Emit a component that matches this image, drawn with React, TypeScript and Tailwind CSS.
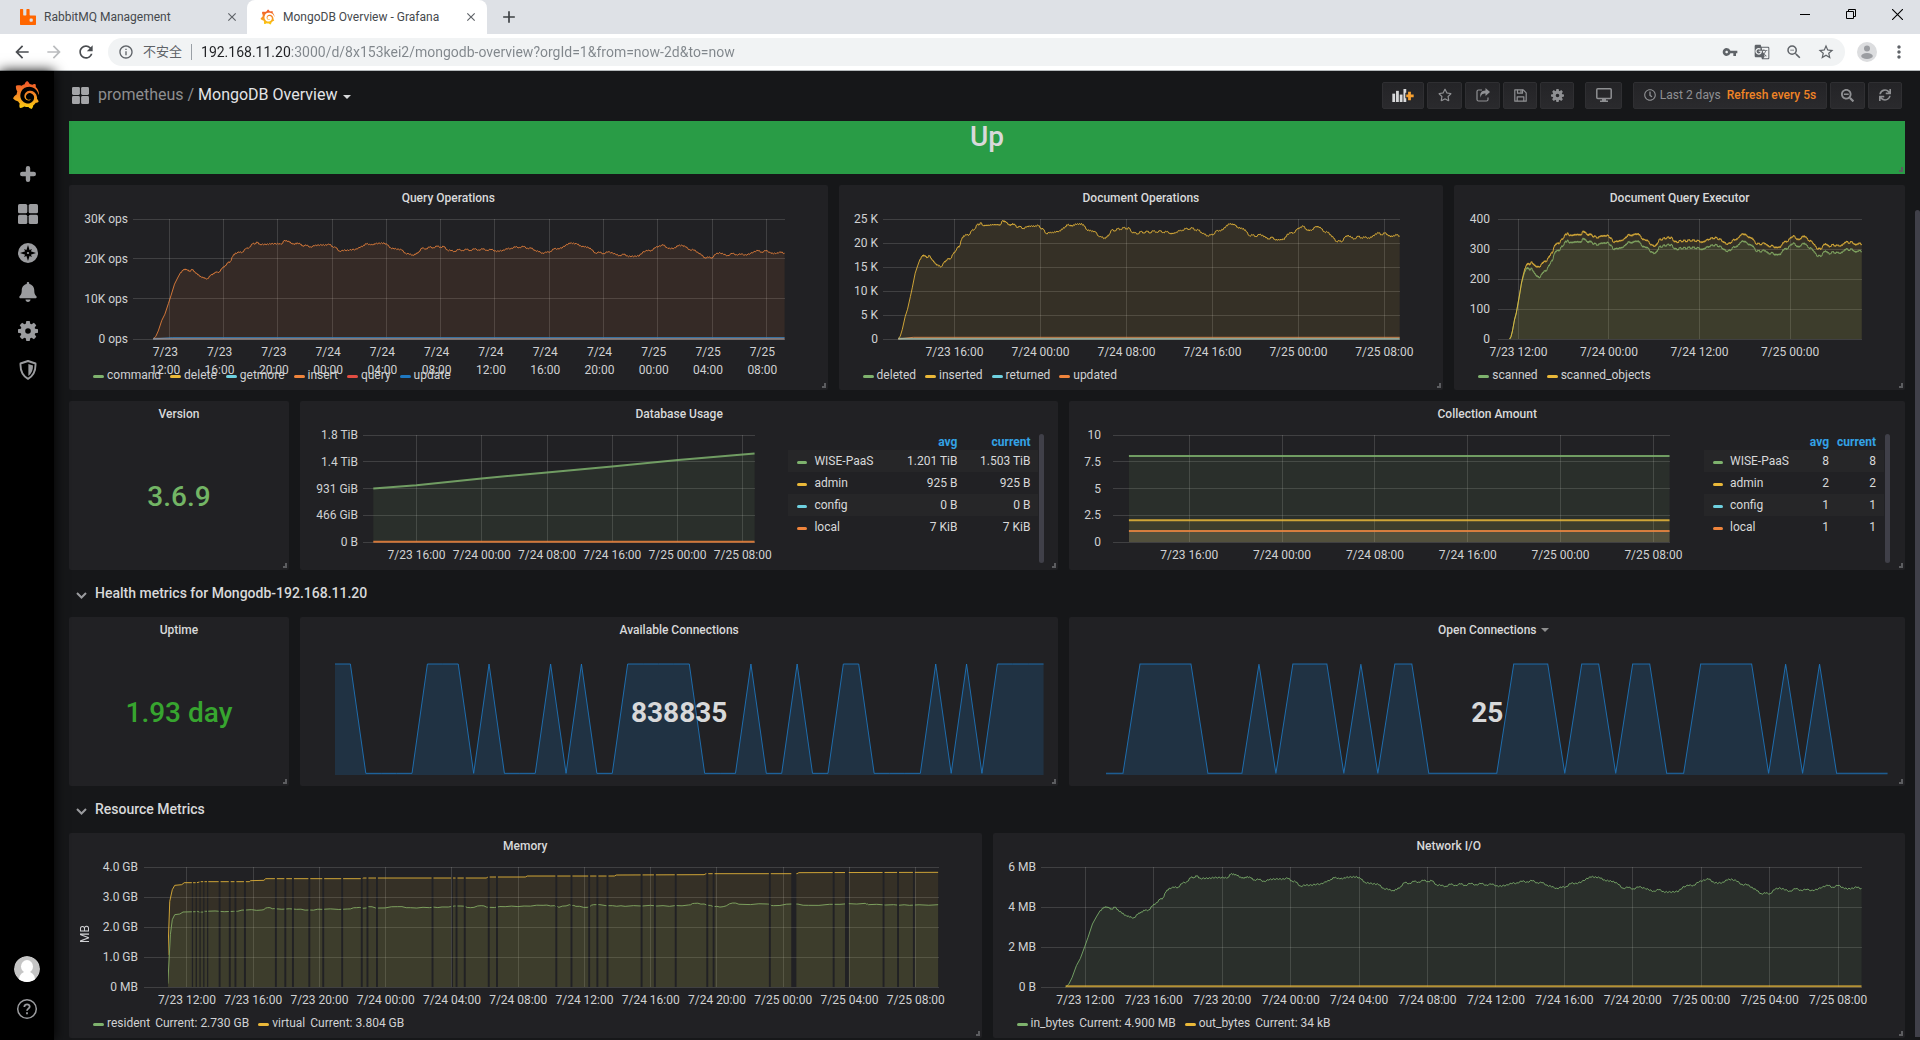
import React, { useId } from "react";
import { FaBell, FaRegClock, FaRegStar, FaSearchMinus, FaSync } from "react-icons/fa";
import {
  MdAdd,
  MdArrowBack,
  MdArrowForward,
  MdClose,
  MdGTranslate,
  MdInfoOutline,
  MdMoreVert,
  MdRefresh,
  MdStarBorder,
  MdVpnKey,
  MdZoomOut,
} from "react-icons/md";
import { SiGrafana, SiRabbitmq } from "react-icons/si";

type Point = [number, number];

const GREEN = "#7eb26d";
const YELLOW = "#eab839";
const CYAN = "#6ed0e0";
const ORANGE = "#ef843c";
const RED = "#e24d42";
const BLUE = "#1f78c1";

/* ---------- data ---------- */

const LOAD_RAW: Point[] = [
  [170, 477], [175, 468], [180, 448], [187, 410], [193, 388], [200, 350], [205, 322], [212, 280], [218, 258], [224, 238],
  [229, 231], [233, 225], [238, 231], [242, 233], [247, 228], [252, 235], [258, 247], [264, 252], [270, 259], [277, 260],
  [283, 250], [288, 242], [294, 238], [300, 236], [306, 224], [312, 213], [318, 203], [322, 199], [327, 180], [332, 168],
  [340, 166], [346, 165], [352, 154], [360, 147], [366, 135], [371, 134], [375, 130], [380, 136], [388, 139], [395, 135],
  [402, 137], [410, 133], [418, 137], [424, 134], [428, 125], [433, 123], [438, 129], [444, 133], [449, 138], [454, 131],
  [460, 137], [465, 142], [472, 141], [480, 146], [488, 143], [495, 138], [503, 141], [510, 138], [518, 138], [524, 145],
  [530, 149], [537, 161], [545, 160], [553, 157], [561, 158], [570, 153], [578, 149], [585, 140], [590, 136], [597, 136],
  [603, 140], [610, 132], [618, 135], [625, 131], [632, 140], [638, 149], [645, 154], [653, 153], [660, 158], [667, 168],
  [675, 173], [682, 175], [688, 173], [694, 163], [700, 151], [708, 153], [715, 147], [722, 149], [730, 144], [737, 147],
  [743, 145], [750, 157], [757, 160], [765, 162], [772, 156], [780, 159], [788, 155], [795, 159], [803, 154], [812, 157],
  [820, 154], [828, 158], [836, 156], [845, 160], [852, 163], [860, 157], [868, 154], [876, 151], [884, 147], [892, 148],
  [900, 145], [908, 151], [915, 151], [923, 158], [930, 164], [938, 168], [946, 166], [953, 163], [960, 154], [968, 152],
  [976, 151], [985, 137], [992, 134], [999, 132], [1006, 137], [1013, 142], [1020, 147], [1027, 146], [1034, 156],
  [1042, 168], [1050, 166], [1058, 170], [1066, 165], [1075, 166], [1083, 175], [1090, 177], [1098, 173], [1105, 178],
  [1112, 182], [1120, 178], [1128, 180], [1136, 163], [1145, 160], [1152, 159], [1160, 150], [1168, 142], [1176, 140],
  [1183, 148], [1190, 154], [1198, 149], [1205, 143], [1212, 139], [1220, 147], [1228, 156], [1236, 158], [1244, 165],
  [1251, 176], [1258, 185], [1265, 184], [1272, 185], [1279, 173], [1287, 166], [1295, 174], [1303, 177], [1312, 170],
  [1320, 174], [1328, 173], [1338, 174], [1346, 173], [1355, 162], [1363, 160], [1370, 165], [1378, 160], [1386, 165],
  [1393, 172], [1400, 167], [1408, 166], [1415, 169],
];

/* Adds the small sampling ripple between two readings. */
function ripple(points: Point[], from: number, size: number): Point[] {
  const out: Point[] = [];
  points.forEach((p, i) => {
    out.push(p);
    const next = points[i + 1];
    if (next && p[0] > from) {
      const wobble = (i % 2 === 0 ? 1 : -1) * size;
      out.push([(p[0] * 2 + next[0]) / 3, (p[1] * 2 + next[1]) / 3 + wobble]);
      out.push([(p[0] + next[0] * 2) / 3, (p[1] + next[1] * 2) / 3 - wobble]);
    }
  });
  return out;
}

const LOAD: Point[] = ripple(
  LOAD_RAW.map(([x, y]): Point => [(x - 170) / 1245, (477 - y) / 359]),
  0.04,
  0.007,
);

const scaled = (k: number): Point[] => LOAD.map(([x, v]): Point => [x, v * k]);

const SCANNED = scaled(0.85);
const SCANNED_OBJECTS = SCANNED.map(([x, v]): Point => {
  const extra = x < 0.03 ? 0 : x < 0.085 ? ((x - 0.03) / 0.055) * 0.09 : x < 0.13 ? 0.09 - ((x - 0.085) / 0.045) * 0.03 : 0.06;
  return [x, v + extra];
});

const mem = (pts: Point[]): Point[] => pts.map(([x, y]): Point => [(x - 266) / 1220, (487 - y) / 360]);

const MEM_VIRTUAL = mem([
  [266, 391], [269, 230], [273, 195], [277, 182], [288, 180], [292, 174], [312, 174], [318, 171], [395, 171], [397, 168],
  [418, 167], [421, 162], [573, 162], [576, 160], [770, 160], [773, 157], [832, 157], [835, 154], [973, 154], [976, 151],
  [1115, 150], [1118, 147], [1262, 147], [1265, 144], [1486, 143],
]);

const MEM_RESIDENT = ripple(
  mem([
    [266, 477], [270, 330], [273, 285], [277, 270], [285, 268], [290, 262], [310, 261], [320, 262], [326, 260], [370, 260],
    [390, 256], [415, 256], [424, 249], [435, 252], [470, 254], [490, 256], [510, 254], [550, 253], [565, 249], [580, 250],
    [584, 246], [600, 250], [630, 246], [650, 249], [680, 249], [700, 247], [730, 244], [745, 249], [762, 243], [775, 248],
    [800, 246], [830, 244], [860, 242], [878, 243], [885, 248], [902, 240], [912, 245], [930, 248], [940, 240], [970, 243],
    [990, 245], [1030, 242], [1060, 245], [1090, 241], [1100, 236], [1115, 238], [1130, 246], [1145, 246], [1160, 235],
    [1175, 239], [1215, 238], [1225, 243], [1255, 238], [1280, 242], [1330, 239], [1370, 236], [1375, 240], [1415, 240],
    [1440, 242], [1486, 240],
  ]),
  0.03,
  0.003,
);

/* Moments without a reading, as [position, width]. */
const MEM_GAPS: Point[] = [
  [305, 2], [311, 2], [317, 2], [323, 2], [329, 2], [348, 3], [364, 3], [373, 3], [388, 3], [437, 3], [452, 3], [464, 3],
  [490, 3], [512, 3], [542, 3], [573, 3], [582, 3], [597, 3], [685, 3], [716, 3], [723, 3], [736, 3], [774, 3], [787, 3],
  [881, 3], [905, 3], [933, 3], [946, 3], [962, 3], [1016, 3], [1037, 3], [1070, 3], [1120, 3], [1130, 3], [1219, 3],
  [1257, 8], [1320, 3], [1341, 6], [1399, 3], [1422, 3], [1447, 3],
].map(([x, w]): Point => [(x - 266) / 1220, w / 1220]);

const flat = (v: number): Point[] => [[0, v], [1, v]];

const AVAILABLE = "11000011101000101001111100010010011000010101111";
const OPEN = "00111100010111010110000011101101100111101010000";

/* ---------- charts ---------- */

interface Series {
  color: string;
  points: Point[];
  width?: number;
  fill?: boolean;
  opacity?: number;
}

interface ChartProps {
  className: string;
  yLabels: string[];
  xLabels: string[];
  first: number;
  step: number;
  start: number;
  series: Series[];
  labelGap?: number;
  gaps?: Point[];
}

const pct = (v: number) => `${v * 100}%`;

function Chart({ className, yLabels, xLabels, first, step, start, series, labelGap = 5, gaps }: ChartProps) {
  const id = useId();
  const px = (t: number) => (start + t * (1 - start)) * 1000;
  const py = (v: number) => (1 - v) * 1000;
  const spans: Point[] = [];
  if (gaps) {
    let from = 0;
    gaps.forEach(([x, w]) => {
      spans.push([from, x - w / 2]);
      from = x + w / 2;
    });
    spans.push([from, 1]);
  }
  return (
    <svg className={`block w-full overflow-visible text-[12px] ${className}`} role="img" aria-label="Time series">
      <g stroke="#ffffff" strokeOpacity="0.14" shapeRendering="crispEdges">
        {yLabels.map((l, i) => (
          <line key={l} x1="0" x2="100%" y1={pct(i / (yLabels.length - 1))} y2={pct(i / (yLabels.length - 1))} />
        ))}
        {xLabels.map((l, i) => (
          <line key={l} x1={pct(first + i * step)} x2={pct(first + i * step)} y1="0" y2="100%" />
        ))}
      </g>
      <svg width="100%" height="100%" viewBox="0 0 1000 1000" preserveAspectRatio="none" className="overflow-visible">
        {gaps && (
          <clipPath id={id}>
            {spans.map(([a, b]) => (
              <rect key={a} x={px(a)} width={px(b) - px(a)} y="-20" height="1040" />
            ))}
          </clipPath>
        )}
        <g clipPath={gaps ? `url(#${id})` : undefined}>
          {series.map((s, i) => {
            const line = s.points.map(([t, v]) => `${px(t).toFixed(1)} ${py(v).toFixed(1)}`).join(" L");
            return (
              <g key={i}>
                {s.fill !== false && <path d={`M${px(s.points[0][0])} 1000 L${line} L1000 1000Z`} fill={s.color} fillOpacity="0.1" />}
                <path
                  d={`M${line}`}
                  fill="none"
                  stroke={s.color}
                  strokeWidth={s.width ?? 1}
                  strokeOpacity={s.opacity ?? 0.85}
                  strokeLinejoin="round"
                  vectorEffect="non-scaling-stroke"
                />
              </g>
            );
          })}
        </g>
      </svg>
      <g fill="#d0d1d3" textAnchor="end">
        {yLabels.map((l, i) => (
          <text key={l} x={-labelGap} y={pct(i / (yLabels.length - 1))} dy="4">
            {l}
          </text>
        ))}
      </g>
      <g fill="#d0d1d3" textAnchor="middle">
        {xLabels.map((l, i) => {
          const lines = l.split("|");
          const x = pct(first + i * step);
          return lines.map((t, n) => (
            <text key={l + n} x={x} y="100%" dx={lines.length > 1 ? -4 : 0} dy={17 + n * 18}>
              {t}
            </text>
          ));
        })}
      </g>
    </svg>
  );
}

function Sparkline({ bits }: { bits: string }) {
  const n = bits.length - 1;
  const line = bits
    .split("")
    .map((b, i) => `${((i / n) * 1000).toFixed(1)} ${b === "1" ? 0 : 985}`)
    .join(" L");
  return (
    <svg className="block h-full w-full overflow-visible" viewBox="0 0 1000 1000" preserveAspectRatio="none" aria-hidden="true">
      <path d={`M0 1000 L${line} L1000 1000Z`} fill="#1f78c1" fillOpacity="0.2" />
      <path d={`M${line}`} fill="none" stroke="#1f78c1" strokeOpacity="0.85" strokeWidth="1" vectorEffect="non-scaling-stroke" />
    </svg>
  );
}

/* ---------- panels ---------- */

function Panel({ title, className, caret, children }: { title: string; className: string; caret?: boolean; children: React.ReactNode }) {
  return (
    <section className={`relative flex min-w-0 flex-col rounded-xs bg-[#212124] ${className}`}>
      <h2 className="flex h-[25px] shrink-0 items-center justify-center text-[12px] font-medium text-[#d8d9da]">
        {title}
        {caret && <span className="mt-px -mr-[13px] ml-[5px] h-0 w-0 border-x-4 border-t-4 border-x-transparent border-t-[#8e8e8e]" />}
      </h2>
      {children}
      <Handle />
    </section>
  );
}

function Handle() {
  return <span className="absolute right-[2px] bottom-[2px] h-[5px] w-[4px] border-r-2 border-b-2 border-[#5c5d60]" />;
}

function Legend({ items }: { items: { name: string; color: string; current?: string }[] }) {
  return (
    <ul className="mt-[27px] flex h-[18px] items-center gap-[9px] pl-6">
      {items.map((it) => (
        <li key={it.name}>
          <button type="button" className="flex items-center gap-[3px] text-[12px] leading-[18px] text-[#d0d1d3]">
            <span className="mt-[2px] h-[3px] w-[11px] rounded-xs" style={{ backgroundColor: it.color }} />
            <span>{it.name}</span>
            {it.current && <span className="pl-[2px]">Current: {it.current}</span>}
          </button>
        </li>
      ))}
    </ul>
  );
}

function LegendTable({ rows, className, lastCol }: { rows: [string, string, string, string][]; className: string; lastCol: string }) {
  return (
    <>
      <table className={`shrink-0 table-fixed border-collapse self-start text-[12px] leading-[16px] text-[#d8d9da] ${className}`}>
        <thead>
          <tr className="h-4 text-right text-[#33a2e5]">
            <td />
            <th scope="col" className="w-[74px] p-0 pr-2 font-bold">avg</th>
            <th scope="col" className={`p-0 pr-2 font-bold ${lastCol}`}>current</th>
          </tr>
        </thead>
        <tbody>
          {rows.map(([name, color, avg, current]) => (
            <tr key={name} className="h-[22px] odd:bg-[#262628]">
              <td className="p-0">
                <button type="button" className="flex items-center gap-[7px] pl-[9px] whitespace-nowrap">
                  <span className="mt-[2px] h-[3px] w-[10px] rounded-xs" style={{ backgroundColor: color }} />
                  {name}
                </button>
              </td>
              <td className="p-0 pr-2 text-right">{avg}</td>
              <td className="p-0 pr-2 text-right">{current}</td>
            </tr>
          ))}
        </tbody>
      </table>
      <div className="ml-px h-[129px] w-[5px] shrink-0 rounded-full bg-[#404049]" />
    </>
  );
}

function RowTitle({ children }: { children: string }) {
  return (
    <h2 className="col-span-24 h-[25px]">
      <button type="button" className="flex h-full items-center gap-2 pl-[7px] text-[14px] font-medium text-[#d8d9da]">
        <svg className="mt-1 h-[7px] w-[11px]" viewBox="0 0 11 7" fill="none" stroke="#9a9b9e" strokeWidth="2" aria-hidden="true">
          <path d="M1 1l4.500 4.500L10 1" />
        </svg>
        {children}
      </button>
    </h2>
  );
}

/* ---------- icons ---------- */

function Apps({ className }: { className: string }) {
  return (
    <svg className={className} viewBox="0 0 20 20" fill="currentColor" aria-hidden="true">
      <rect width="9.300" height="9.300" rx="1.600" />
      <rect x="10.700" width="9.300" height="9.300" rx="1.600" />
      <rect y="10.700" width="9.300" height="9.300" rx="1.600" />
      <rect x="10.700" y="10.700" width="9.300" height="9.300" rx="1.600" />
    </svg>
  );
}

function Plus({ className }: { className: string }) {
  return (
    <svg className={className} viewBox="0 0 16 16" aria-hidden="true">
      <path d="M8 2.200v11.600M2.200 8h11.600" stroke="currentColor" strokeWidth="4.400" strokeLinecap="round" />
    </svg>
  );
}

function Gear({ className }: { className: string }) {
  return (
    <svg className={className} viewBox="0 0 20 20" aria-hidden="true">
      <circle cx="10" cy="10" r="5.100" fill="none" stroke="currentColor" strokeWidth="4.600" />
      <g fill="currentColor">
        {[0, 45, 90, 135, 180, 225, 270, 315].map((a) => (
          <path key={a} d="M8.300 0h3.400l.8 4h-5z" transform={`rotate(${a} 10 10)`} />
        ))}
      </g>
    </svg>
  );
}

function Share() {
  return (
    <svg className="h-[14px] w-[14px]" viewBox="0 0 14 14" fill="none" aria-hidden="true">
      <path d="M6 2H2.500A1.500 1.500 0 0 0 1 3.500v8A1.500 1.500 0 0 0 2.500 13h8a1.500 1.500 0 0 0 1.500-1.500V9.500" stroke="currentColor" strokeWidth="1.200" />
      <path d="M9.500 0L14 4 9.500 8V5.600C6.800 5.600 5 6.500 4.600 9.800 3.300 5 5.500 2.500 9.500 2.400z" fill="currentColor" />
    </svg>
  );
}

function Floppy() {
  return (
    <svg className="h-[13px] w-[13px]" viewBox="0 0 13 13" fill="none" stroke="currentColor" strokeWidth="1.200" strokeLinejoin="round" aria-hidden="true">
      <path d="M.8.800h8.400l3 3v8.400H.8z" />
      <path d="M3.500.800v3.400h5V.800M3.200 12.200V7.800h6.600v4.400" />
      <path d="M7 1.200v2.600" />
    </svg>
  );
}

function GrafanaLogo({ className }: { className: string }) {
  return (
    <>
      <svg className="absolute h-0 w-0" aria-hidden="true">
        <defs>
          <linearGradient id="grafana" x1="0" x2="0" y1="0" y2="1">
            <stop offset="0" stopColor="#f0532a" />
            <stop offset="0.5" stopColor="#f58a25" />
            <stop offset="1" stopColor="#fcd20f" />
          </linearGradient>
        </defs>
      </svg>
      <SiGrafana className={className} fill="url(#grafana)" />
    </>
  );
}

function Compass({ className }: { className: string }) {
  return (
    <svg className={className} viewBox="0 0 20 20" aria-hidden="true">
      <circle cx="10" cy="10" r="10" fill="currentColor" />
      <path d="M10 2l1.900 6.100L18 10l-6.100 1.900L10 18l-1.900-6.100L2 10l6.100-1.900z" fill="#000" />
      <path d="M10 4.500l1.600 3.900L15.500 10l-3.900 1.600L10 15.500l-1.600-3.900L4.500 10l3.900-1.600z" fill="#000" transform="rotate(45 10 10)" />
      <circle cx="10" cy="10" r="1.100" fill="currentColor" />
    </svg>
  );
}

function Shield({ className }: { className: string }) {
  return (
    <svg className={className} viewBox="0 0 18 20" aria-hidden="true">
      <path d="M9 1l7.500 2.500c.3 7-1.700 12-7.500 15.300C3.200 15.500 1.200 10.500 1.500 3.500z" fill="none" stroke="currentColor" strokeWidth="1.900" strokeLinejoin="round" />
      <path d="M9.400 4l4.600 1.500c0 4.600-1.400 8-4.600 10.500z" fill="currentColor" />
    </svg>
  );
}

function AddPanel() {
  return (
    <svg className="h-[13px] w-[22px]" viewBox="0 0 23 14" aria-hidden="true">
      <g fill="#d8d9da">
        <rect y="5" width="3" height="9" />
        <rect x="4" y="2" width="3" height="12" />
        <rect x="8" y="6" width="3" height="8" />
        <path d="M12 0h3v4h-1v6h1v4h-3z" />
      </g>
      <path d="M17 3h3v3h3v3h-3v3h-3V9h-2V6h2z" fill="#f6a030" />
    </svg>
  );
}

function Monitor() {
  return (
    <svg className="h-[14px] w-4" viewBox="0 0 16 14" fill="none" aria-hidden="true">
      <rect x="0.800" y="0.800" width="14.400" height="9.700" rx="1" stroke="currentColor" strokeWidth="1.500" />
      <path d="M6 10.500h4v2h2V14H4v-1.500h2z" fill="currentColor" />
    </svg>
  );
}

/* ---------- page chrome ---------- */

function IconButton({ label, className = "", children }: { label: string; className?: string; children: React.ReactNode }) {
  return (
    <button type="button" aria-label={label} className={`flex items-center justify-center ${className}`}>
      {children}
    </button>
  );
}

function NavButton({ label, className, children }: { label: string; className: string; children: React.ReactNode }) {
  return (
    <IconButton
      label={label}
      className={`h-[27px] rounded-xs border border-[#2f2f32] bg-linear-to-b from-[#242427] to-[#2a2a2d] text-[#8f9093] ${className}`}
    >
      {children}
    </IconButton>
  );
}

function Browser() {
  return (
    <header className="shrink-0 border-b border-[#b5b9bb] font-['Roboto','Noto_Sans_CJK_SC',sans-serif]">
      <div className="flex h-[34px] bg-[#dee1e6]">
        <div className="flex w-[247px] items-center pr-2 pl-5 text-[12px] text-[#45494d]">
          <SiRabbitmq className="h-4 w-4 text-[#ff6600]" />
          <span className="ml-2 flex-1 whitespace-nowrap">RabbitMQ Management</span>
          <IconButton label="Close RabbitMQ Management">
            <MdClose className="h-[14px] w-[14px] text-[#5f6368]" />
          </IconButton>
        </div>
        <div className="flex w-[240px] items-center rounded-t-lg bg-white pr-[9px] pl-[13px] text-[12px] text-[#45494d]">
          <GrafanaLogo className="h-4 w-[15px]" />
          <span className="ml-2 flex-1 whitespace-nowrap">MongoDB Overview - Grafana</span>
          <IconButton label="Close MongoDB Overview">
            <MdClose className="h-[14px] w-[14px] text-[#5f6368]" />
          </IconButton>
        </div>
        <IconButton label="New tab" className="ml-3">
          <MdAdd className="h-5 w-5 text-[#3c4043]" />
        </IconButton>
        <div className="ml-auto flex items-center gap-9 pr-[17px] pb-[6px] text-black">
          <IconButton label="Minimize">
            <svg className="h-[10px] w-[10px]" viewBox="0 0 10 10" stroke="currentColor" aria-hidden="true"><path d="M0 5.500h10" /></svg>
          </IconButton>
          <IconButton label="Restore">
            <svg className="h-[10px] w-[10px]" viewBox="0 0 10 10" fill="none" stroke="currentColor" aria-hidden="true"><path d="M.5 2.500h7v7h-7zM2.500 2.500v-2h7v7h-2" /></svg>
          </IconButton>
          <IconButton label="Close window">
            <svg className="h-[11px] w-[11px]" viewBox="0 0 10 10" fill="none" stroke="currentColor" aria-hidden="true"><path d="M0 0l10 10M10 0L0 10" /></svg>
          </IconButton>
        </div>
      </div>
      <div className="flex h-9 items-center bg-white pr-[11px] pl-3 text-[#5f6368]">
        <IconButton label="Back"><MdArrowBack className="h-5 w-5 text-[#4a4d51]" /></IconButton>
        <IconButton label="Forward" className="ml-3"><MdArrowForward className="h-5 w-5 text-[#babcbe]" /></IconButton>
        <IconButton label="Reload" className="ml-3"><MdRefresh className="h-5 w-5 text-[#4a4d51]" /></IconButton>
        <form className="ml-3 flex h-7 flex-1 items-center rounded-full bg-[#f1f3f4] pr-[10px] pl-[10px]" onSubmit={(e) => e.preventDefault()}>
          <MdInfoOutline className="h-4 w-4" />
          <span className="ml-[9px] text-[13px]">不安全</span>
          <span className="mx-[9px] h-4 w-px bg-[#9aa0a6]" />
          <input
            aria-label="Address"
            type="text"
            defaultValue="192.168.11.20:3000/d/8x153kei2/mongodb-overview?orgId=1&from=now-2d&to=now"
            className="min-w-0 flex-1 bg-[linear-gradient(to_right,#202124_89px,#80868b_89px)] bg-clip-text text-[14px] text-transparent outline-none"
          />
          <IconButton label="Passwords"><MdVpnKey className="h-4 w-4" /></IconButton>
          <IconButton label="Translate" className="ml-4"><MdGTranslate className="h-4 w-4" /></IconButton>
          <IconButton label="Zoom" className="ml-[15px]"><MdZoomOut className="h-[18px] w-[18px]" /></IconButton>
          <IconButton label="Bookmark" className="ml-[14px]"><MdStarBorder className="h-[18px] w-[18px]" /></IconButton>
        </form>
        <IconButton label="Profile" className="ml-3">
          <svg className="h-5 w-5" viewBox="0 0 20 20" aria-hidden="true">
            <circle cx="10" cy="10" r="10" fill="#dcdddf" />
            <circle cx="10" cy="6.500" r="3" fill="#9b9da1" />
            <ellipse cx="10" cy="14" rx="5.800" ry="3" fill="#9b9da1" />
          </svg>
        </IconButton>
        <IconButton label="Menu" className="ml-3"><MdMoreVert className="h-5 w-5" /></IconButton>
      </div>
    </header>
  );
}

function Sidebar() {
  return (
    <nav className="z-10 flex w-[54px] shrink-0 flex-col items-center bg-black pt-[10px] text-[#9b9c9f] shadow-[0_0_12px_#000]">
      <a href="#home" aria-label="Home" className="mr-[2px]">
        <GrafanaLogo className="h-7 w-7" />
      </a>
      <div className="mt-[54px] ml-[2px] flex flex-col items-center gap-[19px]">
        <a href="#create" aria-label="Create" className="flex h-[22px] items-center"><Plus className="h-4 w-4" /></a>
        <a href="#dashboards" aria-label="Dashboards"><Apps className="h-5 w-5" /></a>
        <a href="#explore" aria-label="Explore"><Compass className="h-5 w-5" /></a>
        <a href="#alerting" aria-label="Alerting"><FaBell className="h-5 w-[18px]" /></a>
        <a href="#configuration" aria-label="Configuration"><Gear className="h-5 w-5" /></a>
        <a href="#admin" aria-label="Server Admin"><Shield className="h-5 w-[18px]" /></a>
      </div>
      <div className="mt-auto mb-5 flex flex-col items-center gap-4">
        <a href="#profile" aria-label="Profile">
          <svg className="h-[26px] w-[26px]" viewBox="0 0 26 26" aria-hidden="true">
            <clipPath id="face"><circle cx="13" cy="13" r="13" /></clipPath>
            <g clipPath="url(#face)">
              <circle cx="13" cy="13" r="13" fill="#c5c5c5" />
              <ellipse cx="13" cy="10.500" rx="6" ry="6.500" fill="#fff" />
              <ellipse cx="13" cy="23" rx="8" ry="7.500" fill="#fff" />
            </g>
          </svg>
        </a>
        <a href="#help" aria-label="Help">
          <svg className="h-[22px] w-[22px]" viewBox="0 0 22 22" fill="none" stroke="currentColor" strokeWidth="1.500" aria-hidden="true">
            <circle cx="11" cy="11" r="9.300" />
            <path d="M8.300 9c0-3.600 5.600-3.400 5.400-.2-.1 1.800-2.700 2-2.700 4" strokeWidth="1.800" />
            <path d="M11 14.300v1.900" strokeWidth="1.800" />
          </svg>
        </a>
      </div>
    </nav>
  );
}

function Toolbar() {
  return (
    <div className="flex h-[50px] items-center pr-[3px] pb-[2px] text-[16px]">
      <button type="button" className="flex items-center pl-[3px] text-[#8e8e90]">
        <Apps className="h-[17px] w-[17px] text-[#a4a5a8]" />
        <span className="ml-[9px]">prometheus /</span>
        <span className="ml-1 text-[#e3e4e6]">MongoDB Overview</span>
        <span className="mt-1 ml-[6px] h-0 w-0 border-x-4 border-t-4 border-x-transparent border-t-[#d8d9da]" />
      </button>
      <div className="ml-auto flex items-center gap-[3px]">
        <NavButton label="Add panel" className="w-[42px]"><AddPanel /></NavButton>
        <NavButton label="Star" className="w-[35px]"><FaRegStar className="h-[14px] w-[14px]" /></NavButton>
        <NavButton label="Share" className="w-[35px]"><Share /></NavButton>
        <NavButton label="Save" className="w-[34px]"><Floppy /></NavButton>
        <NavButton label="Settings" className="w-[34px]"><Gear className="h-[13px] w-[13px]" /></NavButton>
        <NavButton label="Cycle view" className="mx-2 w-[37px]"><Monitor /></NavButton>
        <NavButton label="Time range" className="w-[194px] gap-1 text-[12px]">
          <FaRegClock className="h-3 w-3" />
          <span>Last 2 days</span>
          <span className="ml-[2px] font-medium text-[#f08426]">Refresh every 5s</span>
        </NavButton>
        <NavButton label="Zoom out" className="w-[35px]"><FaSearchMinus className="h-[13px] w-[13px]" /></NavButton>
        <NavButton label="Refresh" className="w-[34px]"><FaSync className="h-3 w-3" /></NavButton>
      </div>
    </div>
  );
}

const EIGHT_HOURS = ["7/23 16:00", "7/24 00:00", "7/24 08:00", "7/24 16:00", "7/25 00:00", "7/25 08:00"];
const FOUR_HOURS = [
  "7/23 12:00", "7/23 16:00", "7/23 20:00", "7/24 00:00", "7/24 04:00", "7/24 08:00",
  "7/24 12:00", "7/24 16:00", "7/24 20:00", "7/25 00:00", "7/25 04:00", "7/25 08:00",
];

export default function App() {
  return (
    <div className="flex min-h-screen flex-col bg-[#161719] font-['Roboto',sans-serif]">
      <Browser />
      <div className="flex flex-1">
        <Sidebar />
        <main className="relative min-w-0 flex-1 pr-[15px] pb-[2px] pl-[15px]">
          <Toolbar />
          <div className="grid grid-cols-24 gap-[11px]">
            <section className="relative col-span-24 flex h-[53px] justify-center bg-[#299c46] text-[28px] leading-8 font-medium text-[#d8d9da]">
              Up
              <Handle />
            </section>

            <Panel title="Query Operations" className="col-span-10 h-[205px]">
              <div className="pt-[9px] pr-[43px] pl-16">
                <Chart
                  className="h-[120px]"
                  yLabels={["30K ops", "20K ops", "10K ops", "0 ops"]}
                  xLabels={FOUR_HOURS.map((l) => l.replace(" ", "|"))}
                  first={0.0557}
                  step={0.0833}
                  start={0.031}
                  series={[
                    { color: ORANGE, points: scaled(0.833) },
                    { color: BLUE, points: [[0, 0], [0.03, 0.012], [1, 0.012]], fill: false },
                    { color: "#a89a98", points: flat(0.002), fill: false, width: 2, opacity: 0.7 },
                  ]}
                />
              </div>
              <Legend
                items={[
                  { name: "command", color: GREEN },
                  { name: "delete", color: YELLOW },
                  { name: "getmore", color: CYAN },
                  { name: "insert", color: ORANGE },
                  { name: "query", color: RED },
                  { name: "update", color: BLUE },
                ]}
              />
            </Panel>

            <Panel title="Document Operations" className="col-span-8 h-[205px]">
              <div className="pt-[9px] pr-[44px] pl-11">
                <Chart
                  className="h-[120px]"
                  yLabels={["25 K", "20 K", "15 K", "10 K", "5 K", "0"]}
                  xLabels={EIGHT_HOURS}
                  first={0.1384}
                  step={0.1664}
                  start={0.0296}
                  series={[
                    { color: YELLOW, points: LOAD },
                    { color: ORANGE, points: [[0, 0], [0.03, 0.014], [1, 0.014]], fill: false },
                    { color: "#9fb8a8", points: flat(0.002), fill: false, width: 2 },
                  ]}
                />
              </div>
              <Legend
                items={[
                  { name: "deleted", color: GREEN },
                  { name: "inserted", color: YELLOW },
                  { name: "returned", color: CYAN },
                  { name: "updated", color: ORANGE },
                ]}
              />
            </Panel>

            <Panel title="Document Query Executor" className="col-span-6 h-[205px]">
              <div className="pt-[9px] pr-[43px] pl-11">
                <Chart
                  className="h-[120px]"
                  yLabels={["400", "300", "200", "100", "0"]}
                  xLabels={["7/23 12:00", "7/24 00:00", "7/24 12:00", "7/25 00:00"]}
                  first={0.0561}
                  step={0.249}
                  start={0.032}
                  labelGap={8}
                  series={[
                    { color: GREEN, points: SCANNED },
                    { color: YELLOW, points: SCANNED_OBJECTS },
                  ]}
                />
              </div>
              <Legend items={[{ name: "scanned", color: GREEN }, { name: "scanned_objects", color: YELLOW }]} />
            </Panel>

            <Panel title="Version" className="col-span-3 h-[169px]">
              <div className="flex flex-1 items-center justify-center pb-[3px] text-[28px] font-medium text-[#73b565]">3.6.9</div>
            </Panel>

            <Panel title="Database Usage" className="col-span-10 h-[169px]">
              <div className="flex pt-2 pr-[14px]">
                <div className="min-w-0 flex-1 pt-px pr-[34px] pl-[63px]">
                  <Chart
                    className="h-[107px]"
                    yLabels={["1.8 TiB", "1.4 TiB", "931 GiB", "466 GiB", "0 B"]}
                    xLabels={EIGHT_HOURS}
                    first={0.1368}
                    step={0.1666}
                    start={0.0263}
                    series={[
                      { color: GREEN, points: [[0, 0.5], [0.113, 0.531], [0.284, 0.594], [0.455, 0.65], [0.626, 0.706], [0.799, 0.766], [1, 0.828]], width: 2 },
                      { color: ORANGE, points: flat(0.003), width: 2 },
                    ]}
                  />
                </div>
                <LegendTable
                  className="w-[250px]"
                  lastCol="w-[73px]"
                  rows={[
                    ["WISE-PaaS", GREEN, "1.201 TiB", "1.503 TiB"],
                    ["admin", YELLOW, "925 B", "925 B"],
                    ["config", CYAN, "0 B", "0 B"],
                    ["local", ORANGE, "7 KiB", "7 KiB"],
                  ]}
                />
              </div>
            </Panel>

            <Panel title="Collection Amount" className="col-span-11 h-[169px]">
              <div className="flex pt-2 pr-[15px]">
                <div className="min-w-0 flex-1 pt-px pr-[34px] pl-11">
                  <Chart
                    className="h-[107px]"
                    yLabels={["10", "7.5", "5", "2.5", "0"]}
                    xLabels={EIGHT_HOURS}
                    first={0.137}
                    step={0.1668}
                    start={0.0286}
                    labelGap={12}
                    series={[
                      { color: GREEN, points: flat(0.804), width: 2 },
                      { color: YELLOW, points: flat(0.204), width: 2 },
                      { color: CYAN, points: flat(0.102), width: 1, opacity: 0.3 },
                      { color: ORANGE, points: flat(0.102), width: 2 },
                    ]}
                  />
                </div>
                <LegendTable
                  className="w-[180px]"
                  lastCol="w-[47px]"
                  rows={[
                    ["WISE-PaaS", GREEN, "8", "8"],
                    ["admin", YELLOW, "2", "2"],
                    ["config", CYAN, "1", "1"],
                    ["local", ORANGE, "1", "1"],
                  ]}
                />
              </div>
            </Panel>

            <RowTitle>Health metrics for Mongodb-192.168.11.20</RowTitle>

            <Panel title="Uptime" className="col-span-3 h-[169px]">
              <div className="flex flex-1 items-center justify-center pb-[3px] text-[28px] font-medium text-[#37a52f]">1.93 day</div>
            </Panel>

            <Panel title="Available Connections" className="col-span-10 h-[169px]">
              <div className="grid flex-1 items-center justify-items-center">
                <div className="col-start-1 row-start-1 mb-[11px] h-[111px] w-full self-end pr-[15px] pl-[35px]">
                  <Sparkline bits={AVAILABLE} />
                </div>
                <div className="col-start-1 row-start-1 pb-[3px] text-[28px] font-bold text-[#d8d9da]">838835</div>
              </div>
            </Panel>

            <Panel title="Open Connections" caret className="col-span-11 h-[169px]">
              <div className="grid flex-1 items-center justify-items-center">
                <div className="col-start-1 row-start-1 mb-[11px] h-[111px] w-full self-end pr-[17px] pl-[37px]">
                  <Sparkline bits={OPEN} />
                </div>
                <div className="col-start-1 row-start-1 pb-[3px] text-[28px] font-bold text-[#d8d9da]">25</div>
              </div>
            </Panel>

            <RowTitle>Resource Metrics</RowTitle>

            <Panel title="Memory" className="col-span-12 h-[205px]">
              <div className="flex pt-[9px] pr-[43px]">
                <div className="flex w-[75px] shrink-0 items-center pt-[14px] pl-[7px]">
                  <span className="rotate-180 text-[12px] leading-[18px] text-[#d0d1d3] [writing-mode:vertical-rl]">MB</span>
                </div>
                <Chart
                  className="h-[120px]"
                  yLabels={["4.0 GB", "3.0 GB", "2.0 GB", "1.0 GB", "0 MB"]}
                  xLabels={FOUR_HOURS}
                  first={0.054}
                  step={0.0834}
                  start={0.03}
                  gaps={MEM_GAPS}
                  labelGap={6}
                  series={[
                    { color: GREEN, points: MEM_RESIDENT },
                    { color: YELLOW, points: MEM_VIRTUAL },
                  ]}
                />
              </div>
              <Legend
                items={[
                  { name: "resident", color: GREEN, current: "2.730 GB" },
                  { name: "virtual", color: YELLOW, current: "3.804 GB" },
                ]}
              />
            </Panel>

            <Panel title="Network I/O" className="col-span-12 h-[205px]">
              <div className="pt-[9px] pr-[44px] pl-12">
                <Chart
                  className="h-[120px]"
                  yLabels={["6 MB", "4 MB", "2 MB", "0 B"]}
                  xLabels={FOUR_HOURS}
                  first={0.0541}
                  step={0.0834}
                  start={0.03}
                  series={[
                    { color: GREEN, points: scaled(0.957) },
                    { color: YELLOW, points: flat(0.006), width: 2, opacity: 0.7 },
                  ]}
                />
              </div>
              <Legend
                items={[
                  { name: "in_bytes", color: GREEN, current: "4.900 MB" },
                  { name: "out_bytes", color: YELLOW, current: "34 kB" },
                ]}
              />
            </Panel>
          </div>
          <div className="absolute top-[139px] right-0 bottom-[3px] w-[5px] rounded-t-full bg-[#404049]" />
        </main>
      </div>
    </div>
  );
}
